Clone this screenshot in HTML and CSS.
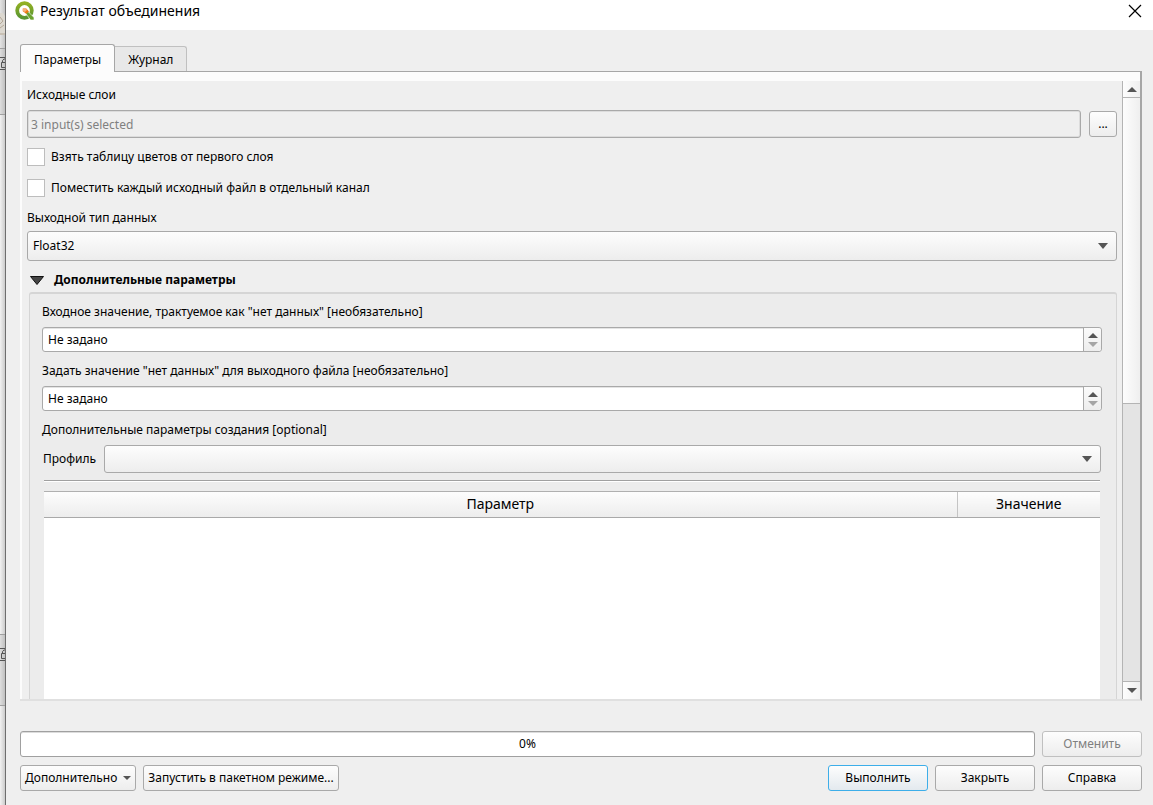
FILE: index.html
```html
<!DOCTYPE html>
<html lang="ru">
<head>
<meta charset="utf-8">
<meta name="viewport" content="width=device-width, initial-scale=1">
<title>Результат объединения</title>
<link rel="stylesheet" href="styles.css">
</head>
<body>
<div class="backdrop" aria-hidden="true">
  <div class="strip strip-toolbar">
    <svg width="6" height="26" viewBox="0 0 6 26"><path d="M0 1h3l2 3v19H0z" fill="#dcd8d0"/><path d="M0 5l3 4-3 3M0 16l4-3M0 22h5" fill="none" stroke="#b4a898"/></svg>
  </div>
  <div class="strip strip-header">
    <svg width="6" height="14" viewBox="0 0 6 14"><path d="M0 .5h6M0 12.5h6M1.500 5.500h4.500v5h-4.500zM2.500 5V3.500L4 2h2" fill="none" stroke="#555"/></svg>
  </div>
  <div class="strip strip-panel"></div>
  <div class="strip strip-dock">
    <svg width="6" height="14" viewBox="0 0 6 14"><path d="M0 .5h6M0 12.500h6M1.500 5.500h4.500v5h-4.500zM2.500 5V3.500L4 2h2" fill="none" stroke="#555"/></svg>
  </div>
  <div class="strip strip-bottom"></div>
</div>
<div class="dialog" role="dialog" aria-labelledby="dialog-title">
  <header class="titlebar">
    <svg class="logo" width="20" height="20" viewBox="0 0 20 20">
      <defs><linearGradient id="ring" x1="0" y1="0" x2="0" y2="1"><stop offset="0" stop-color="#93b023"/><stop offset="1" stop-color="#589632"/></linearGradient></defs>
      <circle cx="9.500" cy="9.500" r="7.300" fill="none" stroke="url(#ring)" stroke-width="3.800"/>
      <path d="M10.500 12l2-2 6.500 6.500V19h-3.500z" fill="#6ba32e" stroke="#fff" stroke-width=".6"/>
      <path d="M7.800 7.500h3.400l2.800 3-2.800 2.300-3.400-2.500z" fill="#ee7913"/>
      <path d="M7.800 7.500h3.200l1 1.500-2 2-2.200-1z" fill="#f6b07c"/>
    </svg>
    <h1 class="title" id="dialog-title">Результат объединения</h1>
    <button class="close" type="button" aria-label="Закрыть окно"><svg width="14" height="14" viewBox="0 0 14 14"><path d="M1 1l12 12M13 1L1 13" stroke="#000" stroke-width="1.200"/></svg></button>
  </header>
  <main class="content">
    <div class="tabs" role="tablist">
      <button class="tab tab-active" type="button" role="tab" aria-selected="true">Параметры</button>
      <button class="tab" type="button" role="tab" aria-selected="false">Журнал</button>
    </div>
    <section class="pane" role="tabpanel">
      <form class="form">
        <label class="label" for="layers">Исходные слои</label>
        <div class="layers-row">
          <input class="layers-input" id="layers" type="text" value="3 input(s) selected" disabled>
          <button class="button browse" type="button">...</button>
        </div>
        <label class="check"><input class="check-box" type="checkbox"><span>Взять таблицу цветов от первого слоя</span></label>
        <label class="check"><input class="check-box" type="checkbox"><span>Поместить каждый исходный файл в отдельный канал</span></label>
        <label class="label" for="dtype">Выходной тип данных</label>
        <div class="combo">
          <select class="select" id="dtype"><option>Float32</option></select>
          <svg class="arrow" width="10" height="6" viewBox="0 0 10 6"><path d="M0 0h10L5 6z"/></svg>
        </div>
        <button class="group-toggle" type="button" aria-expanded="true">
          <svg width="14" height="9" viewBox="0 0 14 9"><path d="M.5.500h13L7 8.500z" fill="#444" stroke="#111"/></svg>
          <span>Дополнительные параметры</span>
        </button>
        <div class="group">
          <label class="label" for="nodata-in">Входное значение, трактуемое как "нет данных" [необязательно]</label>
          <div class="spin">
            <input class="spin-input" id="nodata-in" type="text" value="Не задано">
            <div class="spin-buttons">
              <button class="spin-button" type="button" aria-label="Больше"><svg width="10" height="5" viewBox="0 0 10 5"><path d="M0 5h10L5 0z"/></svg></button>
              <button class="spin-button spin-off" type="button" aria-label="Меньше"><svg width="10" height="5" viewBox="0 0 10 5"><path d="M0 0h10L5 5z"/></svg></button>
            </div>
          </div>
          <label class="label" for="nodata-out">Задать значение "нет данных" для выходного файла [необязательно]</label>
          <div class="spin">
            <input class="spin-input" id="nodata-out" type="text" value="Не задано">
            <div class="spin-buttons">
              <button class="spin-button" type="button" aria-label="Больше"><svg width="10" height="5" viewBox="0 0 10 5"><path d="M0 5h10L5 0z"/></svg></button>
              <button class="spin-button spin-off" type="button" aria-label="Меньше"><svg width="10" height="5" viewBox="0 0 10 5"><path d="M0 0h10L5 5z"/></svg></button>
            </div>
          </div>
          <p class="label">Дополнительные параметры создания [optional]</p>
          <div class="creation">
            <div class="profile-row">
              <label for="profile">Профиль</label>
              <div class="combo combo-small">
                <select class="select" id="profile"><option></option></select>
                <svg class="arrow" width="10" height="6" viewBox="0 0 10 6"><path d="M0 0h10L5 6z"/></svg>
              </div>
            </div>
            <hr class="rule">
            <div class="table-box">
              <table class="table">
                <thead><tr><th class="col-name" scope="col">Параметр</th><th class="col-value" scope="col">Значение</th></tr></thead>
                <tbody></tbody>
              </table>
            </div>
          </div>
        </div>
      </form>
      <div class="scrollbar">
        <button class="scroll-button scroll-up" type="button" aria-label="Прокрутить вверх"><svg width="10" height="5" viewBox="0 0 10 5"><path d="M0 5h10L5 0z"/></svg></button>
        <div class="scroll-track"><div class="scroll-thumb"></div></div>
        <button class="scroll-button scroll-down" type="button" aria-label="Прокрутить вниз"><svg width="10" height="5" viewBox="0 0 10 5"><path d="M0 0h10L5 5z"/></svg></button>
      </div>
    </section>
  </main>
  <footer class="footer">
    <div class="footer-row">
      <div class="progress" role="progressbar" aria-valuenow="0" aria-valuemin="0" aria-valuemax="100">0%</div>
      <button class="button action" type="button" disabled>Отменить</button>
    </div>
    <div class="footer-row">
      <button class="button fit" type="button">Дополнительно <svg width="8" height="4" viewBox="0 0 8 4"><path d="M0 0h8L4 4z"/></svg></button>
      <button class="button fit" type="button">Запустить в пакетном режиме...</button>
      <span class="spacer"></span>
      <button class="button action primary" type="button">Выполнить</button>
      <button class="button action" type="button">Закрыть</button>
      <button class="button action" type="button">Справка</button>
    </div>
  </footer>
</div>
</body>
</html>
```
FILE: styles.css
```css
* {
  box-sizing: border-box;
}

body {
  margin: 0;
  display: flex;
  height: 100vh;
  overflow: hidden;
  background: #efefef;
  color: #000;
  font: 12px/16px "Noto Sans", "Open Sans", sans-serif;
}

button,
input,
select {
  font: inherit;
  color: inherit;
}

button {
  padding: 0;
}

svg {
  display: block;
  flex: none;
  fill: #555;
}

.backdrop {
  display: flex;
  flex-direction: column;
  width: 6px;
  flex: none;
  border-right: 1px solid #6e6e6e;
  overflow: hidden;
}

.strip {
  border-bottom: 1px solid #a0a0a0;
  background: linear-gradient(90deg, #dedede, #c0c0c0);
}

.strip-toolbar {
  height: 49px;
  padding-top: 12px;
  background: linear-gradient(90deg, #e4e4e4, #c4c4c4);
}

.strip-header {
  height: 66px;
  padding-top: 8px;
}

.strip-panel {
  flex: 1;
  background: linear-gradient(90deg, #f2f2f2, #cccccc);
}

.strip-dock {
  height: 71px;
  padding-top: 13px;
}

.strip-bottom {
  height: 99px;
  border: 0;
  background: linear-gradient(90deg, #f2f2f2, #cccccc);
}

.dialog {
  flex: 1;
  min-width: 0;
  display: flex;
  flex-direction: column;
}

.titlebar {
  display: flex;
  align-items: center;
  gap: 5px;
  height: 30px;
  padding: 0 11px 8px 9px;
  background: #fff;
}

.title {
  flex: 1;
  margin: 0;
  font-size: 14px;
  font-weight: 400;
  line-height: 22px;
}

.close {
  border: 0;
  background: none;
}

.content {
  flex: 1;
  min-height: 0;
  display: flex;
  flex-direction: column;
  padding: 14px 11px 0 14px;
}

.tabs {
  display: flex;
  align-items: flex-end;
}

.tab {
  height: 25px;
  padding: 2px 13px 0;
  border: 1px solid #c0c0c0;
  border-bottom: 0;
  border-left: 0;
  border-radius: 0 3px 0 0;
  background: #e8e8e8;
}

.tab-active {
  position: relative;
  z-index: 1;
  height: 28px;
  margin-bottom: -1px;
  border: 1px solid #a6a6a6;
  border-bottom: 0;
  border-radius: 3px 3px 0 0;
  background: #fcfcfc;
}

.pane {
  flex: 1;
  min-height: 0;
  display: flex;
  padding: 9px 0 0 2px;
  border-top: 1px solid #a6a6a6;
  border-right: 2px solid #a6a6a6;
  border-bottom: 2px solid #e0e0e0;
  background: #fcfcfc;
}

.form {
  flex: 1;
  min-width: 0;
  display: flex;
  flex-direction: column;
  padding: 6px 5px 0;
  background: #efefef;
}

.label {
  margin: 0;
}

.layers-row {
  display: flex;
  align-items: center;
  gap: 8px;
  margin: 7px 0 10px;
}

.layers-input {
  flex: 1;
  min-width: 0;
  height: 28px;
  padding: 0 3px;
  border: 1px solid #a9a9a9;
  border-radius: 3px;
  box-shadow: inset 0 0 0 1px #dcdcdc;
  background: #efefef;
  color: #808080;
}

.button {
  display: flex;
  align-items: center;
  justify-content: center;
  gap: 6px;
  height: 26px;
  border: 1px solid #a9a9a9;
  border-radius: 3px;
  background: linear-gradient(#fdfdfd, #ededed);
}

.browse {
  width: 28px;
}

.check {
  display: flex;
  align-items: center;
  gap: 6px;
  height: 18px;
  margin-bottom: 13px;
}

.check-box {
  appearance: none;
  width: 18px;
  height: 18px;
  margin: 0;
  border: 1px solid #bdbdbd;
  background: #fff;
}

.check + .label {
  margin-bottom: 5px;
}

.combo {
  display: grid;
  align-items: center;
  height: 30px;
}

.select,
.arrow {
  grid-area: 1 / 1;
}

.select {
  appearance: none;
  width: 100%;
  height: 100%;
  padding: 0 24px 0 5px;
  border: 1px solid #a9a9a9;
  border-radius: 3px;
  background: linear-gradient(#fdfdfd, #ededed);
}

.arrow {
  justify-self: end;
  margin-right: 9px;
  pointer-events: none;
}

.group-toggle {
  display: flex;
  align-items: center;
  gap: 10px;
  height: 16px;
  margin: 11px 0 4px;
  padding-left: 3px;
  border: 0;
  background: none;
  font-weight: 700;
}

.group {
  flex: 1;
  min-height: 0;
  display: flex;
  flex-direction: column;
  margin-left: 2px;
  padding: 10px 14px 0 12px;
  border: 1px solid #d5d5d5;
  border-top-width: 2px;
  border-bottom: 0;
  border-radius: 3px 3px 0 0;
  background: #ececec;
}

.spin {
  display: flex;
  height: 25px;
  margin: 7px 0 11px;
  border: 1px solid #a9a9a9;
  border-radius: 3px;
  background: #fff;
  box-shadow: inset 0 1px #e4e4e4;
}

.spin-input {
  flex: 1;
  min-width: 0;
  padding: 0 5px;
  border: 0;
  background: none;
}

.spin-buttons {
  width: 18px;
  display: flex;
  flex-direction: column;
  justify-content: center;
  gap: 4px;
  border-left: 1px solid #a9a9a9;
  border-radius: 0 3px 3px 0;
  background: linear-gradient(#fbfbfb, #ededed);
}

.spin-button {
  display: flex;
  justify-content: center;
  border: 0;
  background: none;
}

.spin-off svg {
  fill: #a5a5a5;
}

.creation {
  flex: 1;
  min-height: 0;
  display: flex;
  flex-direction: column;
  padding: 7px 1px 0;
}

.profile-row {
  display: flex;
  align-items: center;
  gap: 8px;
}

.combo-small {
  flex: 1;
  height: 28px;
}

.rule {
  align-self: stretch;
  margin: 7px 1px 9px;
  border: 0;
  border-top: 1px solid #a0a0a0;
  border-bottom: 1px solid #fff;
}

.table-box {
  flex: 1;
  min-height: 0;
  margin: 0 1px;
  border-top: 1px solid #b0b0b0;
  background: #fff;
}

.table {
  width: 100%;
  table-layout: fixed;
  border-collapse: collapse;
}

.table th {
  height: 25px;
  padding: 0;
  border-bottom: 1px solid #a9a9a9;
  background: linear-gradient(#fdfdfd, #ededed);
  font-size: 14px;
  font-weight: 400;
}

.table .col-value {
  width: 143px;
  border-left: 1px solid #c4c4c4;
}

.scrollbar {
  width: 18px;
  display: flex;
  flex-direction: column;
  border-left: 1px solid #b4b4b4;
  background: #e4e4e4;
}

.scroll-button {
  display: flex;
  align-items: center;
  justify-content: center;
  height: 17px;
  border: 0;
  background: linear-gradient(90deg, #fdfdfd, #efefef);
}

.scroll-up {
  border-bottom: 1px solid #b4b4b4;
}

.scroll-down {
  height: 18px;
  border-top: 1px solid #b4b4b4;
}

.scroll-track {
  flex: 1;
}

.scroll-thumb {
  height: 52.5%;
  border-bottom: 1px solid #b4b4b4;
  background: linear-gradient(90deg, #fdfdfd, #efefef);
}

.footer {
  display: flex;
  flex-direction: column;
  gap: 8px;
  padding: 30px 11px 14px 14px;
}

.footer-row {
  display: flex;
  gap: 7px;
}

.progress {
  flex: 1;
  height: 26px;
  border: 1px solid #a0a0a0;
  border-radius: 3px;
  background: #fff;
  box-shadow: inset 0 1px #dcdcdc;
  line-height: 24px;
  text-align: center;
}

.fit {
  padding: 0 4px;
}

.spacer {
  flex: 1;
}

.action {
  width: 100px;
}

.action:disabled {
  border-color: #c0c0c0;
  color: #808080;
}

.primary {
  border-color: #3daee9;
  background: linear-gradient(#fdfdfd, #e3e9ee);
}
```
